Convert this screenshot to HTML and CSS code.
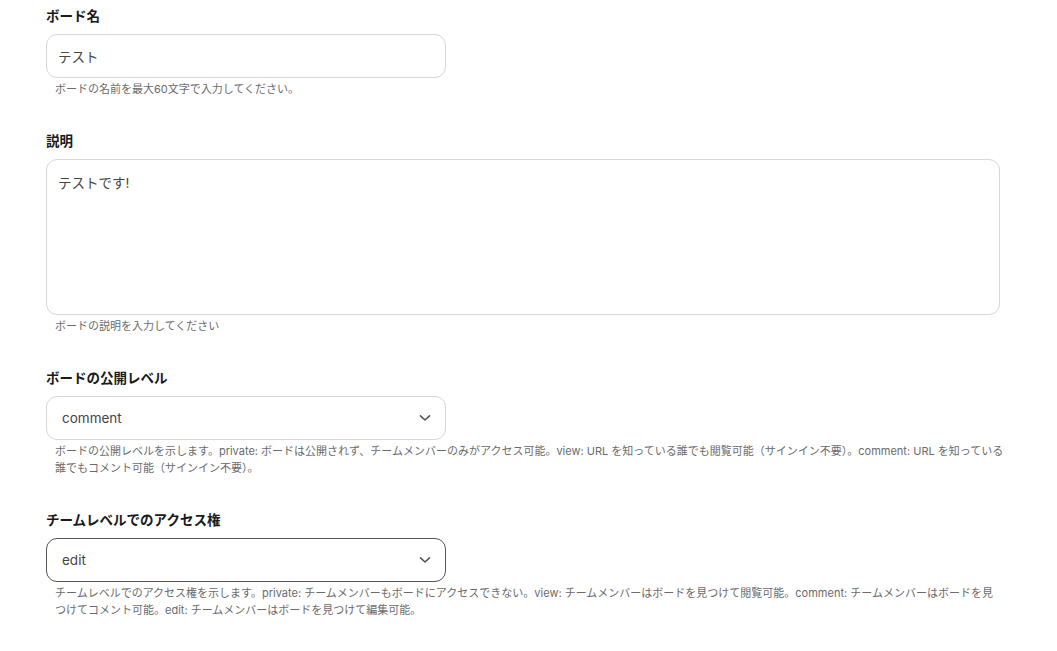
FILE: index.html
```html
<!DOCTYPE html>
<html lang="ja">
<head>
<meta charset="utf-8">
<link rel="stylesheet" href="styles.css">
</head>
<body>
<form class="form">
  <div class="field">
    <label class="label">ボード名</label>
    <div class="control input-short">テスト</div>
    <p class="help">ボードの名前を最大60文字で入力してください。</p>
  </div>
  <div class="field">
    <label class="label">説明</label>
    <div class="control textarea">テストです!</div>
    <p class="help">ボードの説明を入力してください</p>
  </div>
  <div class="field">
    <label class="label">ボードの公開レベル</label>
    <div class="control input-short select">
      <span>comment</span>
      <svg class="chev" width="12" height="8" viewBox="0 0 12 8"><path d="M1.5 1.8 L6 6 L10.5 1.8" fill="none" stroke="#555" stroke-width="1.6" stroke-linecap="round" stroke-linejoin="round"/></svg>
    </div>
    <p class="help">ボードの公開レベルを示します。private: ボードは公開されず、チームメンバーのみがアクセス可能。view: URL を知っている誰でも閲覧可能（サインイン不要）。comment: URL を知っている<br>誰でもコメント可能（サインイン不要）。</p>
  </div>
  <div class="field">
    <label class="label">チームレベルでのアクセス権</label>
    <div class="control input-short select focused">
      <span>edit</span>
      <svg class="chev" width="12" height="8" viewBox="0 0 12 8"><path d="M1.5 1.8 L6 6 L10.5 1.8" fill="none" stroke="#555" stroke-width="1.6" stroke-linecap="round" stroke-linejoin="round"/></svg>
    </div>
    <p class="help">チームレベルでのアクセス権を示します。private: チームメンバーもボードにアクセスできない。view: チームメンバーはボードを見つけて閲覧可能。comment: チームメンバーはボードを見<br>つけてコメント可能。edit: チームメンバーはボードを見つけて編集可能。</p>
  </div>
</form>
</body>
</html>
```
FILE: styles.css
```css
html, body {
  margin: 0;
  padding: 0;
  background: #fff;
}
body {
  font-family: "Inter", "Noto Sans CJK JP", sans-serif;
  color: #222;
}
.form {
  display: flex;
  flex-direction: column;
  gap: 33px;
  padding: 6px 0 0 46px;
  width: 954px;
}
.field {
  display: flex;
  flex-direction: column;
}
.label {
  font-size: 13.5px;
  font-weight: 700;
  line-height: 20px;
  color: #1a1a1a;
  margin-bottom: 8px;
}
.control {
  box-sizing: border-box;
  border: 1px solid #d4d7dc;
  border-radius: 11px;
  font-size: 13.5px;
  color: #444;
  background: #fff;
}
.input-short {
  width: 400px;
  height: 44px;
  display: flex;
  align-items: center;
  padding: 0 11px;
}
.textarea {
  width: 954px;
  height: 156px;
  padding: 13px 11px;
  line-height: 20px;
}
.select {
  justify-content: space-between;
  padding: 0 14px 0 15px;
}
.focused {
  border-color: #555;
}
.chev {
  display: block;
}
.help {
  margin: 3px -20px 0 9px;
  font-size: 11px;
  line-height: 17px;
  color: #6b6b6b;
}
```
